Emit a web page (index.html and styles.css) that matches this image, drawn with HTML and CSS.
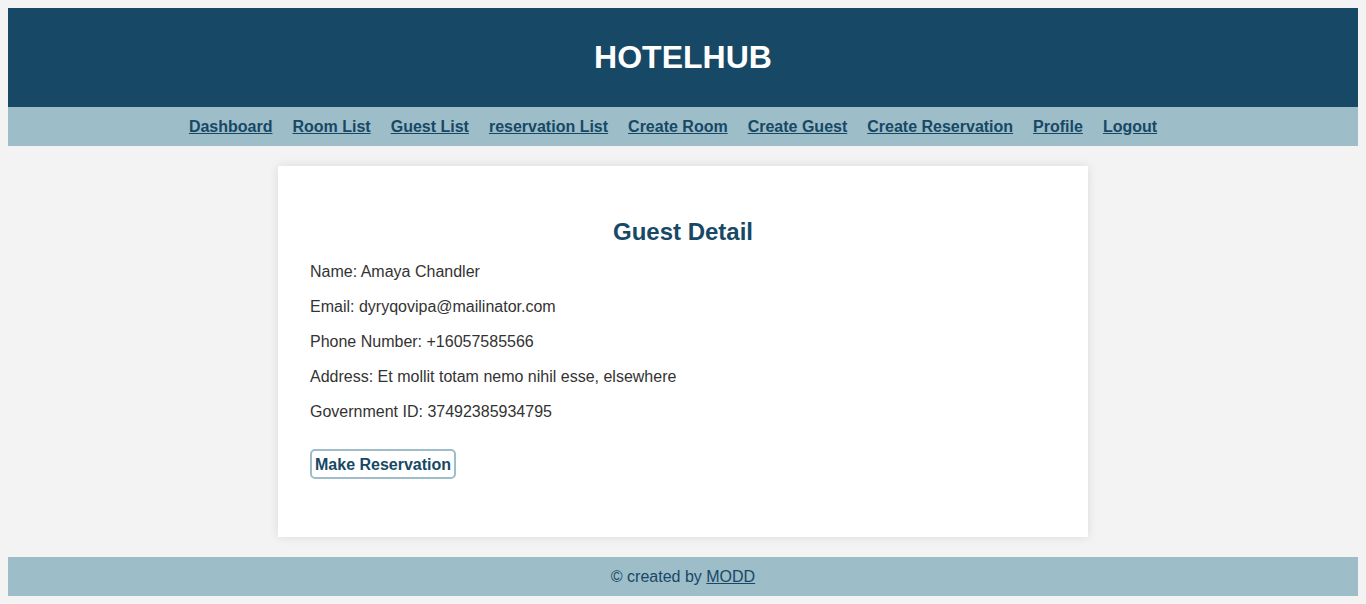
FILE: index.html
```html
<!DOCTYPE html>
<html lang="en">
<head>
<meta charset="utf-8">
<title>HotelHub - Guest Detail</title>
<link rel="stylesheet" href="styles.css">
</head>
<body>
<header class="site-header">
  <h1 class="brand">HOTELHUB</h1>
</header>
<nav class="main-nav">
  <a href="#">Dashboard</a>
  <a href="#">Room List</a>
  <a href="#">Guest List</a>
  <a href="#">reservation List</a>
  <a href="#">Create Room</a>
  <a href="#">Create Guest</a>
  <a href="#">Create Reservation</a>
  <a href="#">Profile</a>
  <a href="#">Logout</a>
</nav>
<main class="content">
  <section class="card">
    <h2 class="card-title">Guest Detail</h2>
    <p class="field">Name: Amaya Chandler</p>
    <p class="field">Email: dyryqovipa@mailinator.com</p>
    <p class="field">Phone Number: +16057585566</p>
    <p class="field">Address: Et mollit totam nemo nihil esse, elsewhere</p>
    <p class="field">Government ID: 37492385934795</p>
    <div class="actions">
      <button class="btn" type="button">Make Reservation</button>
    </div>
  </section>
</main>
<footer class="site-footer">
  &copy; created by <a href="#">MODD</a>
</footer>
</body>
</html>
```
FILE: styles.css
```css
body {
  margin: 8px;
  background: #f3f3f3;
  font-family: "Liberation Sans", Arial, sans-serif;
  color: #333;
}

.site-header {
  background: #174865;
  color: #fff;
  text-align: center;
  padding: 10px;
}

.brand {
  font-size: 32px;
  font-weight: bold;
  margin: 21px 0;
  line-height: 37px;
}

.main-nav {
  background: #9dbdc8;
  display: flex;
  justify-content: center;
  padding: 10px;
  line-height: 19px;
}

.main-nav a {
  color: #174865;
  font-weight: bold;
  font-size: 16px;
  text-decoration: underline;
  margin-right: 20px;
}

.content {
  display: flex;
  justify-content: center;
  padding: 20px 0;
}

.card {
  width: 810px;
  box-sizing: border-box;
  background: #fff;
  padding: 32px 32px 58px;
  box-shadow: 0 0 10px rgba(0, 0, 0, 0.1);
}

.card-title {
  color: #174865;
  font-size: 24px;
  line-height: 28px;
  text-align: center;
  margin: 20px 0 16px;
}

.field {
  font-size: 16px;
  line-height: 19px;
  margin: 16px 0;
}

.actions {
  margin-top: 28px;
}

.btn {
  font-family: "Liberation Sans", Arial, sans-serif;
  font-size: 16px;
  font-weight: bold;
  color: #174865;
  background: #fff;
  border: 2px solid #9dbdc8;
  border-radius: 5px;
  padding: 4px 3px 3px;
  line-height: 19px;
  display: block;
}

.site-footer {
  background: #9dbdc8;
  color: #174865;
  text-align: center;
  padding: 10px;
  font-size: 16px;
  line-height: 19px;
}

.site-footer a {
  color: #174865;
}
```
